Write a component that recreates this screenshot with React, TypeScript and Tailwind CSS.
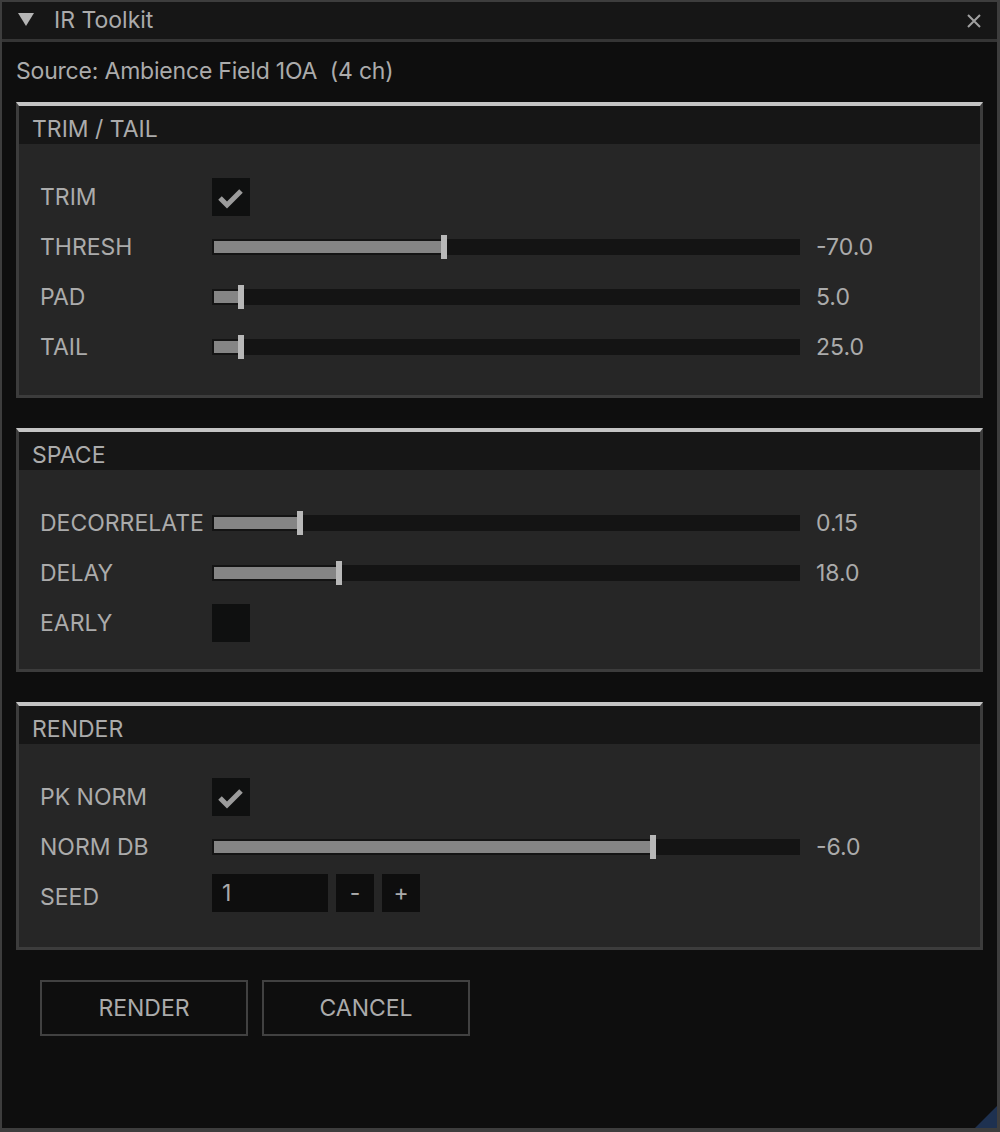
import React from "react";

const font = { fontFamily: "Inter, 'Noto Sans', sans-serif" };

function Check({ on }: { on: boolean }) {
  return (
    <div className="w-[38px] h-[38px] bg-[#0f1010] flex items-center justify-center">
      {on && (
        <svg width="38" height="38" viewBox="0 0 38 38">
          <polyline points="8,20 15,27 29,13" fill="none" stroke="#9c9c9c" strokeWidth="5" />
        </svg>
      )}
    </div>
  );
}

function Slider({ pos, value }: { pos: number; value: string }) {
  return (
    <div className="flex items-center">
      <div className="relative w-[588px] h-4 bg-[#141414] p-[2px]">
        <div className="h-full bg-[#858585]" style={{ width: pos - 2 }} />
        <div className="absolute top-[-4px] w-[6px] h-6 bg-[#b8b8b8]" style={{ left: pos }} />
      </div>
      <span className="ml-4">{value}</span>
    </div>
  );
}

function Row({ label, children, className = "", labelClass = "" }: { label: string; children?: React.ReactNode; className?: string; labelClass?: string }) {
  return (
    <div className={`flex items-center h-[38px] ${className}`}>
      <span className={`w-[172px] shrink-0 ${labelClass}`}>{label}</span>
      {children}
    </div>
  );
}

function Section({ title, children, body }: { title: string; children: React.ReactNode; body: string }) {
  return (
    <div className="border-t-4 border-t-[#c4c4c4] border-x-[3px] border-b-[3px] border-x-[#3c3c3c] border-b-[#3c3c3c]">
      <div className="h-[38px] bg-[#161616] flex items-center pt-[8px] px-[13px]">{title}</div>
      <div className={`bg-[#262626] pl-[21px] flex flex-col gap-3 ${body}`}>{children}</div>
    </div>
  );
}

export default function App() {
  return (
    <div
      style={font}
      className="relative w-[1000px] h-[1132px] bg-[#0e0e0e] border-l-2 border-t-2 border-r-[3px] border-b-4 border-[#3d3d3d] text-[23px] text-[#ababab] flex flex-col overflow-hidden"
    >
      {/* title bar */}
      <div className="h-[40px] shrink-0 bg-[#161616] border-b-[3px] border-[#353535] flex items-center pl-4 pr-4">
        <svg width="16" height="14" viewBox="0 0 16 14" className="mt-[-1px]">
          <polygon points="0,0 16,0 8,13" fill="#b4b4b4" />
        </svg>
        <span className="ml-5 flex-1">IR Toolkit</span>
        <svg width="14" height="14" viewBox="0 0 14 14">
          <path d="M1 1 L13 13 M13 1 L1 13" stroke="#a0a0a0" strokeWidth="2" />
        </svg>
      </div>

      <div className="flex flex-col px-[14px]">
        <div className="h-[30px] mt-[14px] flex items-center tracking-[-0.2px]">Source: Ambience Field 1OA&nbsp;&nbsp;(4 ch)</div>

        <div className="mt-[16px] flex flex-col gap-[30px]">
          <Section title="TRIM / TAIL" body="pt-[34px] pb-[29px]">
            <Row label="TRIM"><Check on /></Row>
            <Row label="THRESH"><Slider pos={229} value="-70.0" /></Row>
            <Row label="PAD"><Slider pos={26} value="5.0" /></Row>
            <Row label="TAIL"><Slider pos={26} value="25.0" /></Row>
          </Section>

          <Section title="SPACE" body="pt-[34px] pb-[27px]">
            <Row label="DECORRELATE"><Slider pos={85} value="0.15" /></Row>
            <Row label="DELAY"><Slider pos={124} value="18.0" /></Row>
            <Row label="EARLY"><Check on={false} /></Row>
          </Section>

          <Section title="RENDER" body="pt-[34px] pb-[35px]">
            <Row label="PK NORM"><Check on /></Row>
            <Row label="NORM DB"><Slider pos={438} value="-6.0" /></Row>
            <Row label="SEED" className="mt-[-4px]" labelClass="pt-[8px]">
              <div className="flex items-center gap-2">
                <div className="w-[116px] h-[38px] bg-[#0e0e0e] flex items-center px-[10px]">1</div>
                <div className="w-[38px] h-[38px] bg-[#0e0e0e] flex items-center justify-center">-</div>
                <div className="w-[38px] h-[38px] bg-[#0e0e0e] flex items-center justify-center">+</div>
              </div>
            </Row>
          </Section>
        </div>

        <div className="mt-[30px] ml-6 flex gap-[14px]">
          <button className="w-[208px] h-[56px] border-2 border-[#414141] bg-[#0e0e0e] text-[#ababab]">RENDER</button>
          <button className="w-[208px] h-[56px] border-2 border-[#414141] bg-[#0e0e0e] text-[#ababab]">CANCEL</button>
        </div>
      </div>

      {/* resize grip */}
      <svg width="22" height="22" viewBox="0 0 22 22" className="absolute right-0 bottom-0">
        <polygon points="22,0 22,22 0,22" fill="#1e3150" />
      </svg>
    </div>
  );
}
